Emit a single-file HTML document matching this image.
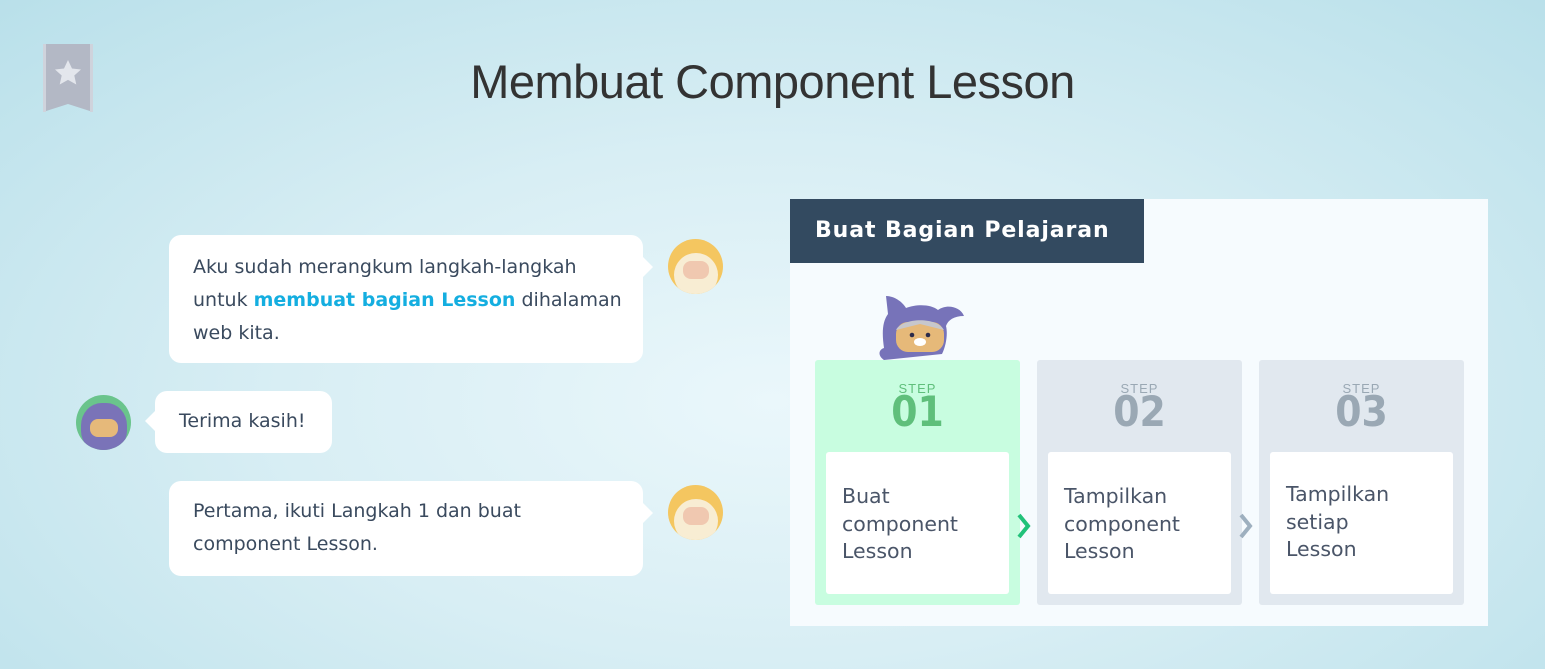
<!DOCTYPE html>
<html><head><style>
*{margin:0;padding:0;box-sizing:border-box}
body{width:1545px;height:669px;overflow:hidden;position:relative;font-family:"DejaVu Sans","Liberation Sans",sans-serif;
background:radial-gradient(ellipse at 50% 60%,#eaf7fb 0%,#d8eef4 45%,#b9e0ea 100%);}
.abs{position:absolute}
h1{position:absolute;left:0;width:1545px;top:54px;text-align:center;font-weight:400;font-size:47px;color:#333;font-family:"Liberation Sans",sans-serif;letter-spacing:-.5px}
.b{position:absolute;background:#fff;border-radius:12px;color:#3a4a5e;font-size:19px;line-height:33px;padding:0 24px;white-space:nowrap}
.b.r:after{content:"";position:absolute;right:-10px;top:22px;border:10px solid transparent;border-right:0;border-left-color:#fff}
.b.l:before{content:"";position:absolute;left:-10px;top:20px;border:10px solid transparent;border-left:0;border-right-color:#fff}
.hl{color:#14aee0;font-weight:bold}
.av{position:absolute;width:55px;height:55px;border-radius:50%;overflow:hidden}
.card{position:absolute;top:360px;width:205px;height:245px;border-radius:3px}
.step{position:absolute;width:100%;text-align:center;top:21px;font-size:13px;letter-spacing:1px;font-family:"Liberation Sans",sans-serif}
.num{position:absolute;width:100%;text-align:center;top:30px;font-size:42px;line-height:44px;font-weight:bold;font-family:"Liberation Sans Narrow","DejaVu Sans Condensed",sans-serif}
.in{position:absolute;left:11px;top:92px;width:183px;height:142px;background:#fff;border-radius:3px;padding:31px 16px;font-size:20.5px;line-height:27.5px;color:#4a5568;white-space:nowrap}
</style></head><body>
<svg class="abs" style="left:43px;top:44px" width="50" height="69" viewBox="0 0 50 69">
<path d="M0 0H50V68L25 60L0 68Z" fill="#b3b8c5"/><path d="M0 0H3V68H0ZM47 0H50V68H47Z" fill="#cfd3dc"/>
<path d="M25 16l4 8.5 9 1-6.7 6 2 9-8.3-4.6-8.3 4.6 2-9-6.7-6 9-1z" fill="#e3e6ec"/></svg>
<h1>Membuat Component Lesson</h1>

<div class="b r" style="left:169px;top:235px;width:474px;height:128px;padding-top:16px">Aku sudah merangkum langkah-langkah<br>untuk <span class="hl">membuat bagian Lesson</span> dihalaman<br>web kita.</div>
<div class="av" style="left:668px;top:239px;background:#f4c660"><div class="abs" style="left:6px;top:14px;width:44px;height:44px;border-radius:50%;background:#f8edd3"></div><div class="abs" style="left:15px;top:22px;width:26px;height:18px;border-radius:8px;background:#f0c8b0"></div></div>
<div class="b l" style="left:155px;top:391px;width:177px;height:62px;padding-top:14px">Terima kasih!</div>
<div class="av" style="left:76px;top:395px;background:#6ac48c"><div class="abs" style="left:5px;top:8px;width:46px;height:50px;border-radius:45%;background:#7a73b8"></div><div class="abs" style="left:14px;top:24px;width:28px;height:18px;border-radius:8px;background:#e6b97a"></div></div>
<div class="b r" style="left:169px;top:481px;width:474px;height:95px;padding-top:14px">Pertama, ikuti Langkah 1 dan buat<br>component Lesson.</div>
<div class="av" style="left:668px;top:485px;background:#f4c660"><div class="abs" style="left:6px;top:14px;width:44px;height:44px;border-radius:50%;background:#f8edd3"></div><div class="abs" style="left:15px;top:22px;width:26px;height:18px;border-radius:8px;background:#f0c8b0"></div></div>

<div class="abs" style="left:790px;top:199px;width:698px;height:427px;background:#f6fbfe"></div>
<div class="abs" style="left:790px;top:199px;width:354px;height:64px;background:#334a60;color:#fff;font-size:22px;font-weight:bold;letter-spacing:.9px;padding:19px 0 0 25px">Buat Bagian Pelajaran</div>

<svg class="abs" style="left:876px;top:294px" width="90" height="70" viewBox="0 0 90 70">
<path d="M10 2C20 2 28 10 30 14C40 10 55 10 62 16C70 10 84 12 88 22C78 22 72 26 70 32C72 40 70 52 66 60L8 66C2 62 2 56 8 54C6 40 6 28 12 20Z" fill="#7773b9"/>
<rect x="20" y="28" width="48" height="30" rx="12" fill="#e6b979"/>
<path d="M20 36C26 24 60 22 68 36L44 30Z" fill="#c7c7cc"/>
<circle cx="36" cy="41" r="2.3" fill="#2b2b4a"/><circle cx="52" cy="41" r="2.3" fill="#2b2b4a"/>
<ellipse cx="44" cy="48" rx="6" ry="4" fill="#fff"/></svg>

<div class="card" style="left:815px;background:#c8fde0"><div class="step" style="color:#5fbf7b">STEP</div><div class="num" style="color:#5fbf7b">01</div><div class="in">Buat<br>component<br>Lesson</div></div>
<div class="card" style="left:1037px;background:#e1e8ef"><div class="step" style="color:#9aa8b4">STEP</div><div class="num" style="color:#9aa8b4">02</div><div class="in">Tampilkan<br>component<br>Lesson</div></div>
<div class="card" style="left:1259px;background:#e1e8ef"><div class="step" style="color:#9aa8b4">STEP</div><div class="num" style="color:#9aa8b4">03</div><div class="in" style="padding-top:29px">Tampilkan<br>setiap<br>Lesson</div></div>
<svg class="abs" style="left:1015px;top:512px" width="18" height="28"><path d="M4 3L13 14L4 25" stroke="#22c27a" stroke-width="4" fill="none"/></svg>
<svg class="abs" style="left:1237px;top:512px" width="18" height="28"><path d="M4 3L13 14L4 25" stroke="#9eb0bf" stroke-width="4" fill="none"/></svg>
</body></html>
